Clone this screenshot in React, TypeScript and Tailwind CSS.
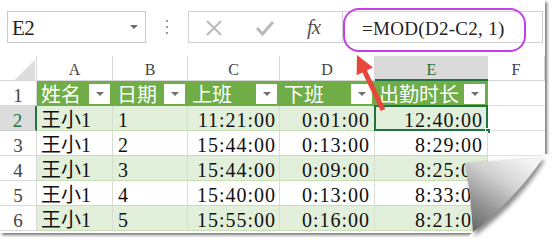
import React from 'react';

const rows = [
  ['王小1', '1', '11:21:00', '0:01:00', '12:40:00'],
  ['王小1', '2', '15:44:00', '0:13:00', '8:29:00'],
  ['王小1', '3', '15:44:00', '0:09:00', '8:25:00'],
  ['王小1', '4', '15:40:00', '0:13:00', '8:33:00'],
  ['王小1', '5', '15:55:00', '0:16:00', '8:21:00'],
];

const headers = ['姓名', '日期', '上班', '下班', '出勤时长'];
const letters = ['A', 'B', 'C', 'D', 'E', 'F'];

function FilterButton() {
  return (
    <span className="ml-auto mr-[3px] w-[21px] h-[20px] bg-white flex items-center justify-center shrink-0">
      <span className="w-0 h-0 border-x-[4px] border-x-transparent border-t-[4px] border-t-[#707070]" />
    </span>
  );
}

function PageCurl() {
  return (
    <svg className="absolute left-[440px] top-[140px]" width="114" height="105" viewBox="0 0 114 105">
      <defs>
        <linearGradient id="flap" x1="0.75" y1="0" x2="0.1" y2="0.95">
          <stop offset="0" stopColor="#f4f4f4" />
          <stop offset="0.35" stopColor="#d2d2d2" />
          <stop offset="0.7" stopColor="#969696" />
          <stop offset="1" stopColor="#6a6a6a" />
        </linearGradient>
        <filter id="soft" x="-20%" y="-20%" width="140%" height="140%">
          <feGaussianBlur stdDeviation="2" />
        </filter>
      </defs>
      {/* cut corner of the page */}
      <polygon points="104,14 114,14 114,105 29,105 29,96" fill="#ffffff" />
      {/* shadow under the flap */}
      <path d="M 27 25 Q 64 22 105 20 Q 80 62 35 96 Q 33 60 27 25 Z" fill="#000" opacity="0.45" filter="url(#soft)" />
      {/* flap */}
      <path d="M 25 23 Q 62 21 103 18 Q 76 58 33 92 Q 31 56 25 23 Z" fill="url(#flap)" />
    </svg>
  );
}

export default function App() {
  return (
    <div className="relative w-[554px] h-[245px] bg-white overflow-hidden font-[family-name:Liberation_Serif,Noto_Sans_CJK_SC,serif]">
      <div className="w-[545px] h-[233px] bg-white shadow-[2px_2px_3px_rgba(0,0,0,0.55)] flex flex-col">
        {/* formula bar */}
        <div className="h-[56px] shrink-0 flex items-start pt-[11px] pl-[7px] pr-[2px]">
          <div className="w-[139px] h-[32px] border border-[#c8c8c8] flex items-center pl-[4px] pr-[7px]">
            <span className="text-[21px] leading-none text-[#222] tracking-[-0.5px] pt-[2px]">E2</span>
            <span className="ml-auto w-0 h-0 border-x-[4px] border-x-transparent border-t-[4px] border-t-[#6b6b6b]" />
          </div>
          <div className="w-[42px] h-[32px] flex flex-col items-center justify-center gap-[4px]">
            <span className="w-[2px] h-[2px] bg-[#9a9a9a]" />
            <span className="w-[2px] h-[2px] bg-[#9a9a9a]" />
            <span className="w-[2px] h-[2px] bg-[#9a9a9a]" />
          </div>
          <div className="w-[155px] h-[32px] border border-[#d2d2d2] flex items-center pl-[16px]">
            <svg width="18" height="18" viewBox="0 0 18 18" className="mt-[1px]">
              <path d="M2 2 L16 16 M16 2 L2 16" stroke="#b9b9b9" strokeWidth="2" />
            </svg>
            <svg width="20" height="18" viewBox="0 0 20 18" className="ml-[32px] mt-[1px]">
              <path d="M2 9 L7.5 15 L18 3" stroke="#b9b9b9" strokeWidth="3" fill="none" />
            </svg>
            <span className="ml-[32px] text-[21px] italic leading-none text-[#555] tracking-[-1px]">fx</span>
          </div>
          <div className="flex-1 h-[32px] border-y border-r border-[#d2d2d2] flex items-center pl-[19px] pt-[3px]">
            <span className="text-[19px] leading-none text-[#222] tracking-[0.3px] whitespace-pre">=MOD(D2-C2, 1)</span>
          </div>
        </div>

        {/* column letters */}
        <div className="grid grid-cols-[37px_76px_75px_92px_95px_113px_1fr] h-[25px] shrink-0">
          <div className="relative border-r border-b border-[#d8d8d8]">
            <svg className="absolute left-0 top-0" width="37" height="25">
              <polygon points="15,24 35,24 35,4" fill="#dcdcdc" />
            </svg>
          </div>
          {letters.map((l) =>
            l === 'E' ? (
              <div key={l} className="flex items-end justify-center bg-[#dadada] border-b-2 border-b-[#217346] text-[16px] leading-[17px] text-[#217346] pb-[1px]">
                {l}
              </div>
            ) : (
              <div key={l} className="flex items-end justify-center border-r border-b border-[#d8d8d8] text-[16px] leading-[17px] text-[#444] pb-[2px]">
                {l}
              </div>
            )
          )}
        </div>

        {/* table header row */}
        <div className="grid grid-cols-[37px_76px_75px_92px_95px_113px_1fr] h-[25px] shrink-0">
          <div className="flex items-end justify-center border-r border-b border-[#d8d8d8] text-[19px] leading-[17px] text-[#444] pb-[1px]">1</div>
          {headers.map((h) => (
            <div key={h} className="flex items-center bg-[#70ad47] pl-[4px] text-white">
              <span className="self-end text-[20px] leading-[17px] pb-[2px] whitespace-nowrap">{h}</span>
              <FilterButton />
            </div>
          ))}
          <div className="border-b border-[#e0e0e0]" />
        </div>

        {/* data rows */}
        {rows.map((r, i) => {
          const band = i % 2 === 0 ? 'bg-[#e2efda]' : 'bg-white';
          const selectedRow = i === 0;
          return (
            <div key={i} className="grid grid-cols-[37px_76px_75px_92px_95px_113px_1fr] h-[25px] shrink-0">
              {selectedRow ? (
                <div className="flex items-end justify-center bg-[#dcdcdc] border-b border-b-[#d0d0d0] border-r-2 border-r-[#217346] text-[19px] leading-[17px] text-[#217346] pb-[1px]">
                  {i + 2}
                </div>
              ) : (
                <div className="flex items-end justify-center border-r border-b border-[#d8d8d8] text-[19px] leading-[17px] text-[#444] pb-[1px]">
                  {i + 2}
                </div>
              )}
              <div className={`flex items-end pl-[4px] border-r border-r-[#d6dfd0] border-b border-b-[#c6e0b4] text-[20px] leading-[17px] text-[#111] pb-[1px] ${band}`}>
                {r[0]}
              </div>
              <div className={`flex items-end pl-[5px] border-r border-r-[#d6dfd0] border-b border-b-[#c6e0b4] text-[20px] leading-[17px] text-[#111] pb-[1px] ${band}`}>
                {r[1]}
              </div>
              <div className={`flex items-end justify-end pr-[3px] border-r border-r-[#d6dfd0] border-b border-b-[#c6e0b4] text-[20px] leading-[17px] tracking-[1px] text-[#111] pb-[1px] ${band}`}>
                {r[2]}
              </div>
              <div className={`flex items-end justify-end pr-[4px] border-r border-r-[#d6dfd0] border-b border-b-[#c6e0b4] text-[20px] leading-[17px] tracking-[1px] text-[#111] pb-[1px] ${band}`}>
                {r[3]}
              </div>
              <div className={`relative flex items-end justify-end pr-[4px] border-r border-r-[#d6dfd0] border-b border-b-[#c6e0b4] text-[20px] leading-[17px] tracking-[1px] text-[#111] pb-[1px] ${band}`}>
                {r[4]}
                {selectedRow && (
                  <>
                    <span className="absolute -left-[1px] -top-[1px] -right-[1px] -bottom-[1px] border-2 border-[#217346]" />
                    <span className="absolute -right-[4px] -bottom-[4px] w-[6px] h-[6px] bg-[#217346] border border-white" />
                  </>
                )}
              </div>
              <div className="border-b border-[#e0e0e0]" />
            </div>
          );
        })}
      </div>

      {/* highlight around the formula */}
      <div className="absolute left-[343px] top-[8px] w-[183px] h-[44px] rounded-[16px] border-2 border-[#c63ee8]" />

      {/* red arrow */}
      <svg className="absolute left-[340px] top-[50px]" width="50" height="65" viewBox="0 0 50 65">
        <line x1="43" y1="60" x2="24" y2="20" stroke="#e8463c" strokeWidth="5" />
        <polygon points="17,5 33,17.4 16.6,25.2" fill="#e8463c" />
      </svg>

      <PageCurl />
    </div>
  );
}
